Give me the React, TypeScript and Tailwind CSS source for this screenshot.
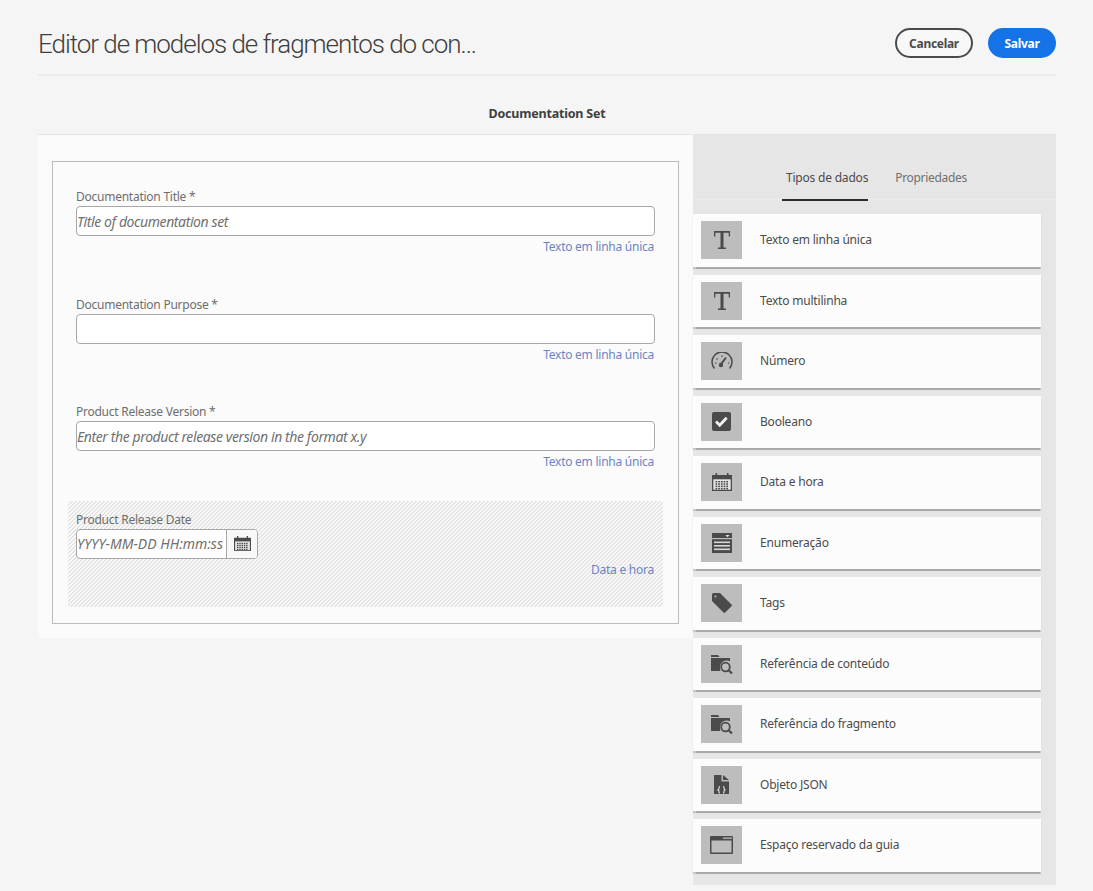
import { ReactNode } from "react";

const FONT = "font-['Noto_Sans','Open_Sans',sans-serif]";

function TextIcon() {
    return (
        <svg width="16" height="18" viewBox="0 0 16 18" fill="#4b4b4b">
            <path d="M0 0h16v5.500h-1.300V1.800H9.500v14.600H12V18H4v-1.600h2.500V1.800H1.300v3.700H0z" />
        </svg>
    );
}

function GaugeIcon() {
    return (
        <svg width="22" height="18" viewBox="0 0 22 18" fill="none" stroke="#4b4b4b">
            <path d="M3.500 16.500A10 10 0 1 1 18.500 16.500" strokeWidth="1.500" />
            <path d="M15 5.500L10.500 11.500" strokeWidth="2" />
            <circle cx="10" cy="13" r="2.200" fill="#4b4b4b" stroke="none" />
            <path d="M4 11h1.500M5.500 6.500l1 1M11 3.500v1.500M17 11h1.500" strokeWidth="1.200" />
        </svg>
    );
}

function CheckIcon() {
    return (
        <svg width="19" height="19" viewBox="0 0 19 19">
            <rect width="19" height="19" rx="2" fill="#4b4b4b" />
            <path d="M4 9.500l3.700 3.700 7-7.500" fill="none" stroke="#f2f2f2" strokeWidth="2.800" />
        </svg>
    );
}

function CalendarIcon({ size = 20 }: { size?: number }) {
    const cells = [];
    for (let y = 0; y < 4; y++) {
        for (let x = 0; x < 5; x++) {
            cells.push(<rect key={x + "-" + y} x={3.500 + x * 2.700} y={8 + y * 2.300} width="1.700" height="1.500" fill="#4b4b4b" />);
        }
    }
    return (
        <svg width={size} height={size * 0.9} viewBox="0 0 20 18">
            <path d="M0 2h20v16H0z" fill="#4b4b4b" />
            <rect x="1.300" y="6.300" width="17.400" height="10.400" fill="#e4e4e4" />
            <rect x="3.500" y="0" width="1.600" height="4" fill="#4b4b4b" />
            <rect x="14.900" y="0" width="1.600" height="4" fill="#4b4b4b" />
            {cells}
        </svg>
    );
}

function EnumIcon() {
    return (
        <svg width="20" height="20" viewBox="0 0 20 20">
            <rect width="20" height="20" fill="#4b4b4b" />
            <path d="M13.500 2h4l-2 2.200z" fill="#e6e6e6" />
            <rect x="0" y="5" width="20" height="1.200" fill="#bdbdbd" />
            <rect x="2" y="8.500" width="16" height="1.600" fill="#d8d8d8" />
            <rect x="2" y="12" width="16" height="1.600" fill="#d8d8d8" />
            <rect x="2" y="15.500" width="16" height="1.600" fill="#d8d8d8" />
        </svg>
    );
}

function TagIcon() {
    return (
        <svg width="20" height="20" viewBox="0 0 20 20">
            <path fillRule="evenodd" fill="#4b4b4b" d="M0 1.500A1.500 1.500 0 0 1 1.500 0H8l11.500 11.500a1.200 1.200 0 0 1 0 1.700l-6.300 6.300a1.200 1.200 0 0 1-1.700 0L0 8zM3.500 2.500a1 1 0 1 0 0 2 1 1 0 0 0 0-2z" />
        </svg>
    );
}

function FolderSearchIcon() {
    return (
        <svg width="22" height="20" viewBox="0 0 22 20">
            <path d="M0 1h7l1.500 2H0zM0 4h19v3.200A7 7 0 0 0 9 14.500c0 .9.100 1.700.4 2.500H0z" fill="#4b4b4b" />
            <circle cx="14.500" cy="13" r="4.300" fill="none" stroke="#4b4b4b" strokeWidth="1.800" />
            <path d="M17.500 16l3.500 3.500" stroke="#4b4b4b" strokeWidth="2.200" />
        </svg>
    );
}

function JsonIcon() {
    return (
        <svg width="15" height="19" viewBox="0 0 15 19">
            <path d="M0 0h7.500v6.500H15V19H0zM9 0l6 5H9z" fill="#4b4b4b" />
            <path d="M6 11.500C4.800 11.500 5 12.500 5 13.500s-.3 1.200-1 1.500c.7.300 1 .5 1 1.500s-.2 1.500 1 1.500M9 11.500c1.200 0 1 1 1 2s.3 1.200 1 1.500c-.7.300-1 .5-1 1.500s.2 1.500-1 1.500" fill="none" stroke="#e4e4e4" strokeWidth="1.100" />
        </svg>
    );
}

function WindowIcon() {
    return (
        <svg width="23" height="18" viewBox="0 0 23 18">
            <path fillRule="evenodd" fill="#4b4b4b" d="M0 1a1 1 0 0 1 1-1h21a1 1 0 0 1 1 1v16a1 1 0 0 1-1 1H1a1 1 0 0 1-1-1zM1.500 4.500v12h20v-12z" />
            <rect x="13" y="1.500" width="9" height="1.300" fill="#bdbdbd" />
        </svg>
    );
}

const dataTypes: { label: string; icon: ReactNode }[] = [
    { label: "Texto em linha única", icon: <TextIcon /> },
    { label: "Texto multilinha", icon: <TextIcon /> },
    { label: "Número", icon: <GaugeIcon /> },
    { label: "Booleano", icon: <CheckIcon /> },
    { label: "Data e hora", icon: <CalendarIcon /> },
    { label: "Enumeração", icon: <EnumIcon /> },
    { label: "Tags", icon: <TagIcon /> },
    { label: "Referência de conteúdo", icon: <FolderSearchIcon /> },
    { label: "Referência do fragmento", icon: <FolderSearchIcon /> },
    { label: "Objeto JSON", icon: <JsonIcon /> },
    { label: "Espaço reservado da guia", icon: <WindowIcon /> },
];

const textFields = [
    { label: "Documentation Title *", placeholder: "Title of documentation set" },
    { label: "Documentation Purpose *", placeholder: "" },
    { label: "Product Release Version *", placeholder: "Enter the product release version in the format x.y" },
];

function TextField({ label, placeholder }: { label: string; placeholder: string }) {
    return (
        <div className="h-[107.500px]">
            <label className="block h-[20px] text-[12px] leading-[21px] tracking-[-0.25px] text-[#6e6e6e]">{label}</label>
            <input
                readOnly
                placeholder={placeholder}
                className="block w-full h-[30px] bg-white border border-[#a8a8a8] rounded-[4px] outline-0 text-[14px] italic placeholder:text-[#707070] tracking-[-0.4px]"
            />
            <p className="h-[20px] pr-[1px] text-right text-[12px] leading-[21px] tracking-[-0.25px] text-[#6b84c4]">Texto em linha única</p>
        </div>
    );
}

function DataTypeItem({ label, icon }: { label: string; icon: ReactNode }) {
    return (
        <li className="flex items-center h-[52.500px] pl-[8px] bg-[#fcfcfc] shadow-[0_1.500px_1px_#a9a9a9]">
            <div className="flex items-center justify-center w-[41px] h-[38px] bg-[#bdbdbd]">{icon}</div>
            <span className="ml-[18px] text-[12px] tracking-[-0.2px] text-[#4b4b4b]">{label}</span>
        </li>
    );
}

export default function App() {
    return (
        <div className={`min-h-[891px] bg-[#f5f5f5] pl-[38px] pr-[37px] ${FONT}`}>
            <header className="flex items-center justify-between h-[76px] pt-[12px] border-b-2 border-[#ececec]">
                <h1 className="mt-[2px] font-['Roboto',sans-serif] font-light text-[26px] tracking-[-1.050px] text-[#3f3f3f]">
                    Editor de modelos de fragmentos do con...
                </h1>
                <div className="flex items-center gap-[15px]">
                    <button className="w-[78px] h-[30px] pt-[1px] rounded-full border-2 border-[#4b4b4b] bg-[#f8f8f8] text-[12px] font-bold tracking-[-0.3px] text-[#4b4b4b]">
                        Cancelar
                    </button>
                    <button className="w-[68px] h-[30px] pt-[1px] rounded-full bg-[#1473e6] text-[12px] font-bold tracking-[-0.3px] text-white">
                        Salvar
                    </button>
                </div>
            </header>

            <div className="flex items-center justify-center h-[59px] pt-[18px] border-b border-[#e4e4e4] text-[12.500px] font-bold tracking-[-0.2px] text-[#3f3f3f]">
                Documentation Set
            </div>

            <div className="flex items-start">
                <main className="flex-1 h-[503px] bg-[#fafafa] pt-[26px] pl-[14px] pr-[14px]">
                    <div className="h-[463px] border border-[#bcbcbc] bg-[#fbfbfb] pt-[24px] px-[23px]">
                        {textFields.map((field) => (
                            <TextField key={field.label} label={field.label} placeholder={field.placeholder} />
                        ))}
                        <div className="-mx-[8px] -mt-[8px] h-[106px] px-[8px] pt-[8px] bg-[repeating-linear-gradient(135deg,#e4e4e4_0,#e4e4e4_1.100px,transparent_1.100px,transparent_2.828px)]">
                            <label className="block h-[20px] text-[12px] leading-[21px] tracking-[-0.25px] text-[#6e6e6e]">Product Release Date</label>
                            <div className="flex w-[182px] h-[30px] bg-white border border-[#a8a8a8] rounded-[4px] overflow-hidden">
                                <input
                                    readOnly
                                    placeholder="YYYY-MM-DD HH:mm:ss"
                                    className="w-[149px] min-w-0 outline-0 text-[14px] italic placeholder:text-[#707070]"
                                />
                                <div className="flex flex-1 items-center justify-center border-l border-[#a8a8a8] bg-[#f8f8f8]">
                                    <CalendarIcon size={17} />
                                </div>
                            </div>
                            <p className="h-[20px] pr-[1px] text-right text-[12px] leading-[21px] tracking-[-0.25px] text-[#6b84c4]">Data e hora</p>
                        </div>
                    </div>
                </main>

                <aside className="w-[363px] h-[750px] bg-[#e6e6e6]">
                    <div className="flex justify-center gap-[27px] h-[65px] pt-[33px] border-b border-[#ebebeb]">
                        <div className="h-[33px] pl-[4px] border-b-2 border-[#2c2c2c] text-[12px] leading-[20px] tracking-[-0.2px] text-[#4b4b4b]">Tipos de dados</div>
                        <div className="h-[33px] text-[12px] leading-[20px] tracking-[-0.3px] text-[#707070]">Propriedades</div>
                    </div>
                    <ul className="flex flex-col gap-[8px] w-[348px] mt-[14px]">
                        {dataTypes.map((item) => (
                            <DataTypeItem key={item.label} label={item.label} icon={item.icon} />
                        ))}
                    </ul>
                </aside>
            </div>
        </div>
    );
}
